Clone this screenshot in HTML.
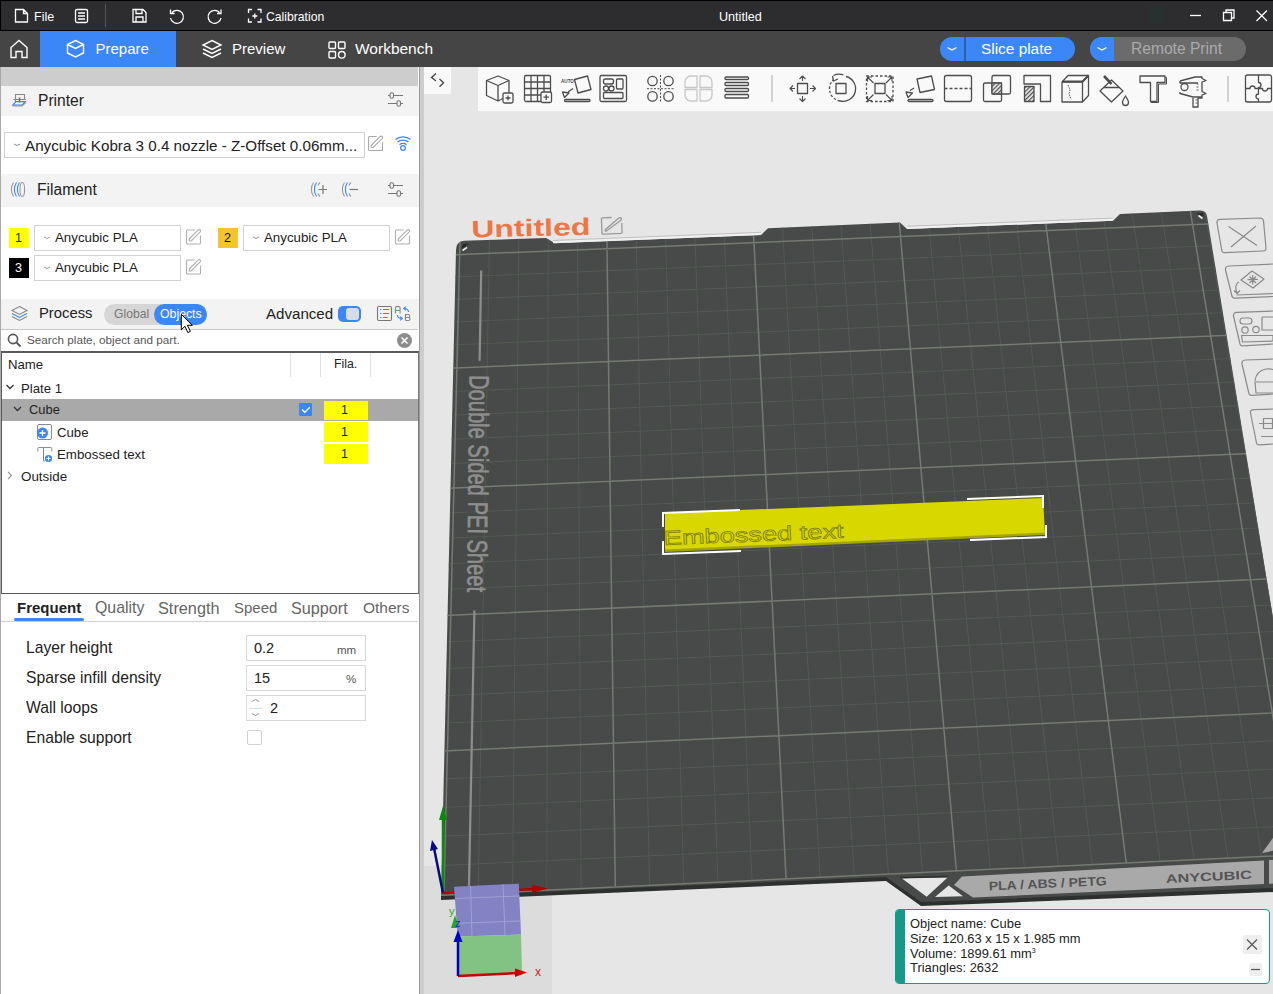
<!DOCTYPE html>
<html><head><meta charset="utf-8">
<style>
*{margin:0;padding:0;box-sizing:border-box}
html,body{width:1273px;height:994px;overflow:hidden;background:#e6e6e6;font-family:"Liberation Sans",sans-serif}
.a{position:absolute}
.t{position:absolute;white-space:nowrap;line-height:1}
svg{position:absolute;overflow:visible}
#title{left:0;top:0;width:1273px;height:31px;background:#2d2d2f;border-top:1px solid #000;border-left:1px solid #000;border-bottom:1px solid #000}
#tabs{left:0;top:31px;width:1273px;height:36px;background:#454545}
#left{left:0;top:67px;width:420px;height:927px;background:#fff;border-left:1px solid #a9a9a9}
.hdr{position:absolute;left:1px;width:418px;background:#f3f3f3}
.box{position:absolute;border:1px solid #d2d2d2;background:#fff}
.ic{stroke:#555;fill:none;stroke-width:1.2}
</style></head><body>
<!-- VIEWPORT -->
<svg class="a" style="left:0;top:0" width="1273" height="994" viewBox="0 0 1273 994">
<rect x="424" y="866" width="128" height="128" fill="#dcdcdc"/>
<path d="M456 250 Q456 241.5 464 240.8 L546 238 L555 243.2 L761 235 L768 228.3 L900 222.6 L907 229 L1113 220.8 L1120 214 L1199 210.6 Q1206 210.5 1207 216 L1275 630 L1275 891 L921 905 L886 880 L441 899 Z" fill="#474a48"/>
<path d="M441 896 L886 877 L921 902 L1275 888 L1275 892 L921 906 L886 881 L441 900 Z" fill="#2e302f"/>
<clipPath id="pc"><path d="M456 250 Q456 241.5 464 240.8 L546 238 L555 243.2 L761 235 L768 228.3 L900 222.6 L907 229 L1113 220.8 L1120 214 L1199 210.6 Q1206 210.5 1207 216 L1275 630 L1275 891 L921 905 L886 880 L441 899 Z"/></clipPath>
<g clip-path="url(#pc)"><path d="M489.5 235.9L478.2 893.4M450.2 277.2L1231.2 244.9M518.9 234.7L512.5 891.8M449.6 299.6L1235.0 266.9M548.2 233.5L546.8 890.2M449.0 322.2L1238.8 289.2M577.5 232.3L581.1 888.5M448.4 345.1L1242.7 311.8M636.1 229.9L649.5 885.3M447.2 391.8L1250.6 357.7M665.4 228.7L683.7 883.7M446.5 415.5L1254.7 381.1M694.6 227.5L717.9 882.1M445.9 439.5L1258.7 404.7M723.9 226.3L752.0 880.5M445.2 463.8L1262.9 428.6M782.3 223.9L820.2 877.3M443.9 513.2L1271.2 477.2M811.5 222.7L854.3 875.7M443.2 538.4L1275.5 502.0M840.7 221.5L888.4 874.1M442.5 563.9L1279.8 527.1M869.9 220.3L922.4 872.5M441.8 589.6L1284.2 552.4M928.2 217.9L990.4 869.3M440.4 642.2L1293.1 604.1M957.3 216.8L1024.4 867.7M439.7 668.9L1297.6 630.4M986.4 215.6L1058.4 866.1M439.0 696.0L1302.2 657.0M1015.5 214.4L1092.3 864.5M438.2 723.4L1306.9 684.0M1073.6 212.0L1160.1 861.3M436.7 779.3L1316.4 738.9M1102.6 210.8L1194.0 859.8M436.0 807.8L1321.2 766.9M1131.7 209.6L1227.9 858.2M435.2 836.6L1326.1 795.3M1160.7 208.4L1261.7 856.6M434.4 865.9L1331.0 824.0M1204.2 206.6L1312.4 854.2M1218.7 206.0L1329.3 853.4" stroke="#535953" stroke-width="1" fill="none"/>
<path d="M460.1 237.1L443.9 895.0M450.8 255.0L1227.4 223.1M606.8 231.1L615.3 886.9M447.8 368.3L1246.7 334.6M753.1 225.1L786.1 878.9M444.6 488.4L1267.0 452.8M899.0 219.1L956.4 870.9M441.1 615.7L1288.6 578.1M1044.5 213.2L1126.2 862.9M437.5 751.2L1311.6 711.3M1189.7 207.2L1295.5 855.0M433.6 895.5L1336.0 853.1" stroke="#757a72" stroke-width="1.5" fill="none"/></g>
<path d="M553 243.2 L761 235 L761 232.3 L553 240.5 Z M907 229 L1113 220.8 L1113 218.1 L907 226.3 Z" fill="#f0f0f0"/><path d="M553 240.5 L761 232.3 M907 226.3 L1113 218.1" stroke="#b4b4b4" stroke-width="0.8"/>
<path d="M902 878.4 L947.6 877.4 L926.7 896.8 Z" fill="#e6e6e6"/><path d="M900 877.5 L948 876.5" stroke="#2f3130" stroke-width="1.6"/>
<path d="M935 897 L948.7 885.5 L963 896.3 Z" fill="#e6e6e6"/>
<path d="M954 885 L962 876.5 L1264 860.5 L1264 884 L973 897.5 Z" fill="#a9a9a9"/>
<path d="M1269 860 L1275 859.7 L1275 883.5 L1269 883.8 Z" fill="#a9a9a9"/>
<path d="M1262 853 L1275 835 L1275 850 L1268 852 Z" fill="#a9a9a9"/>
<text transform="translate(989 890.5) rotate(-2.6)" font-family="Liberation Sans" font-weight="bold" font-size="12.5" fill="#555" textLength="118" lengthAdjust="spacingAndGlyphs">PLA / ABS / PETG</text>
<text transform="translate(1166 883) rotate(-2.8)" font-family="Liberation Sans" font-weight="bold" font-size="12" fill="#555" textLength="86" lengthAdjust="spacingAndGlyphs">ANYCUBIC</text>
<path d="M481.2 270.6 L479.6 360.7 M474.4 610.6 L469 886" stroke="#8e8e8e" stroke-width="2.2"/>
<text transform="translate(469.5 375) rotate(90.6)" font-family="Liberation Sans" font-size="28" fill="#8e8e8e" stroke="#8e8e8e" stroke-width="0.6" textLength="217" lengthAdjust="spacingAndGlyphs">Double Sided PEI Sheet</text>
<path d="M461.5 249 L469.5 243.5 L463 244 Z" fill="#262626"/><path d="M462.5 250.5 L467 247.3" stroke="#f0f0f0" stroke-width="1.6"/><path d="M1196 213.5 L1203 213 L1203.5 216.5 Z" fill="#262626"/><path d="M1198.5 215.5 L1202.5 218.5" stroke="#f0f0f0" stroke-width="1.6"/>
<text x="471.5" y="237.5" font-family="Liberation Sans" font-weight="bold" font-size="24" fill="#f07545" textLength="119" lengthAdjust="spacingAndGlyphs" transform="rotate(-1.3 473 237)">Untitled</text>
<g fill="none" stroke="#999" stroke-width="1.3" stroke-linecap="round"><path d="M611 217.5 L602.5 217.8 Q601.3 217.9 601.4 219 L602 233 Q602.1 234.3 603.3 234.2 L621 233.3 Q622.2 233.2 622.1 232 L621.8 223.5"/><path d="M605.5 229.5 Q604.5 231.5 606.5 231 L620.5 220.5 Q622.5 218.5 620.5 217.7 Q619.5 217.3 618.5 218.2 Z"/></g>
<path d="M665 513 L1043 498 L1045 534 L665 551 Z" fill="#d8d800"/>
<path d="M665 549.5 L1045 532.5 L1045 535 L665 552 Z" fill="#a5a500"/>
<text transform="translate(664 545) rotate(-2.3)" font-family="Liberation Sans" font-size="20" fill="none" stroke="#7a7a06" stroke-width="0.7" textLength="180" lengthAdjust="spacingAndGlyphs">Embossed text</text>
<g stroke="#fff" stroke-width="2" fill="none"><path d="M663 527 V513 L740 510"/><path d="M663 541 V554 L741 551"/><path d="M967 499 L1043 496 V508"/><path d="M970 540 L1046 537 V525"/></g>
<path d="M443 893 L443 812" stroke="#0a8a0a" stroke-width="2.5"/><path d="M439 820 L443 806 L447 820 Z" fill="#0a8a0a"/>
<path d="M443 893 L434 848" stroke="#0a0a80" stroke-width="2.5"/><path d="M430 851 L432 840 L438 849 Z" fill="#0a0a80"/>
<path d="M443 893 L538 889" stroke="#b00000" stroke-width="2.5"/><path d="M532 885 L548 888.5 L532 893 Z" fill="#b00000"/>
<path d="M454 886.7 L518.8 883.7 L521 934.6 L457.7 936.5 Z" fill="#8282c4"/>
<path d="M457.7 936.5 L521 934.6 L522 972.3 L458 976 Z" fill="#82c282"/>
<path d="M470.6 886 L472 936 M503 884.5 L505 935 M455 898.5 L519.5 896 M456.5 923.3 L520.5 921" stroke="#a0a0d4" stroke-width="1" fill="none"/>
<path d="M458 976 L518 973" stroke="#cc0000" stroke-width="2.5"/><path d="M515 968.5 L527 972.5 L515 977 Z" fill="#cc0000"/>
<path d="M458 976 L458 938" stroke="#0000cc" stroke-width="2.5"/><path d="M453.5 942 L458 930 L462.5 942 Z" fill="#0000cc"/>
<path d="M451 928 L455 915 L459 928 Z" fill="#22aa22"/>
<text x="535" y="976" font-family="Liberation Sans" font-size="12" fill="#cc2222">x</text>
<text x="449" y="915" font-family="Liberation Sans" font-size="11" fill="#22aa22">y</text>
<text x="455" y="927" font-family="Liberation Sans" font-size="11" fill="#2222cc">z</text>
<g fill="none" stroke="#8a8a8a" stroke-width="1.2" stroke-linejoin="round"><path d="M1217 223 Q1216.5 219.5 1220 219.3 L1260 218 Q1263 218 1263.5 221 L1266 248 Q1266.3 250.8 1263 251 L1225 252.7 Q1222 252.8 1221.7 250 Z"/><path d="M1228.5 226.5 L1257 245.5 M1256 226 L1231 247"/><path d="M1273 264 L1229 266 Q1225 266.2 1225.5 270 L1231.7 295 Q1232 298.3 1235 298.2 L1273 296.5"/><path d="M1241 280 L1252 271 L1264 279 L1253 288 Z M1247.5 279.7 L1258 279.3 M1252.7 275 V284.5 M1249.5 276.5 L1256 283 M1256 276.5 L1249.5 283"/><path d="M1239 282 Q1235 284 1236 290 L1237 293 M1234 290.5 L1237 293.5 L1240 290.5 M1236.5 295 L1273 293.5"/><path d="M1273 311 L1237 312.3 Q1233 312.5 1233.5 316 L1239.8 343 Q1240 346 1243 345.8 L1273 344"/><rect x="1240" y="318" width="12" height="6" rx="3"/><circle cx="1245" cy="330" r="3.2"/><circle cx="1256" cy="329.5" r="3.2"/><path d="M1262 317 H1273 M1262 317 V330 H1273 M1241.5 335.5 H1273 V341 L1242.5 342 Z"/><path d="M1273 359 L1245.5 360 Q1241.5 360.3 1242 364 L1248.7 392.5 Q1249 395.5 1252 395.3 L1273 394"/><path d="M1255 381 Q1256 371 1266 369 Q1272 368.5 1273 370 M1254.5 382 H1273 M1255 382 L1256 393 H1273"/><path d="M1273 409 L1254 409.6 Q1250 409.8 1250.5 413 L1256.3 442 Q1256.5 445 1259 444.8 L1273 444"/><path d="M1259 423.5 H1273 M1263.5 418.5 h9 v10 h-9 z M1261 436.5 H1273"/></g>
</svg>

<!-- TITLE BAR -->
<div id="title" class="a"></div>
<svg style="left:0;top:0" width="1273" height="31" viewBox="0 0 1273 31">
 <g stroke="#fff" fill="none" stroke-width="1.3">
  <path d="M15.5 9.5h8l4 4v8.5h-12z M23.5 9.5v4h4"/>
  <rect x="75.5" y="9.5" width="12" height="13" rx="1.5"/>
  <path d="M78 13h7M78 16h7M78 19h7"/>
  <path d="M133 9.5h10l3 3v9.5h-13z M136 9.5v4h6v-4 M136 22v-5h7v5"/>
  <path d="M172 12.5a6.5 6.5 0 1 1 -1.5 5.5 M170.5 9.5v4h4"/>
  <path d="M219.5 12.5a6.5 6.5 0 1 0 1.5 5.5 M221 9.5v4h-4"/>
  <path d="M248.5 13v-3.5h3.5 M257.5 9.5h3.5v3.5 M261 18.5v3.5h-3.5 M252 22h-3.5v-3.5 M254.8 13.5v5M252.3 16h5"/>
  <path d="M1190 15.5h11"/>
  <path d="M1223.5 12.5h8v8h-8z M1226 12.5v-2.5h8v8h-2.5"/>
  <path d="M1256.5 10.5l10.5 10.5M1267 10.5l-10.5 10.5"/>
 </g>
 <path d="M105.5 4v23" stroke="#555" stroke-width="1"/>
 <rect x="1148" y="6" width="18" height="17.5" fill="#283030"/>
</svg>
<div class="t" style="left:34px;top:10.5px;font-size:12.5px;color:#fff">File</div>
<div class="t" style="left:266px;top:10.5px;font-size:12.2px;color:#fff">Calibration</div>
<div class="t" style="left:719px;top:10.5px;font-size:12.6px;color:#fff">Untitled</div>

<!-- TAB BAR -->
<div id="tabs" class="a"></div>
<div class="a" style="left:40px;top:31px;width:136px;height:36px;background:#3b87f8"></div>
<svg style="left:0;top:31px" width="440" height="36" viewBox="0 31 440 36">
 <g stroke="#fff" fill="none" stroke-width="1.4">
  <path d="M11 57.5v-10l8-7 8 7v10h-5v-6h-6v6z"/>
  <path d="M75.5 40.5l8 4v8.5l-8 4-8-4v-8.5z M67.5 44.5l8 4 8-4 M75.5 48.5v0"/>
  <path d="M212 40.5l9 4.5-9 4.5-9-4.5z M203 49l9 4.5 9-4.5 M203 53l9 4.5 9-4.5"/>
  <rect x="329" y="42" width="6.5" height="6.5" rx="1"/><rect x="338.5" y="42" width="6.5" height="6.5" rx="1"/>
  <rect x="329" y="51.5" width="6.5" height="6.5" rx="1"/><circle cx="341.8" cy="54.8" r="3.3"/>
 </g>
</svg>
<div class="t" style="left:95.5px;top:41px;font-size:15px;color:#fff">Prepare</div>
<div class="t" style="left:232px;top:41px;font-size:15px;color:#fff">Preview</div>
<div class="t" style="left:355px;top:41px;font-size:15.5px;color:#fff">Workbench</div>

<!-- slice / remote print -->
<div class="a" style="left:940px;top:37px;width:135px;height:24px;border-radius:12px;background:#3b87f8"></div>
<div class="a" style="left:964px;top:37px;width:2px;height:24px;background:#2e5fa8"></div>
<div class="t" style="left:981px;top:41px;font-size:15.4px;color:#fff">Slice plate</div>
<div class="a" style="left:1090px;top:37px;width:156px;height:24px;border-radius:12px;background:#6b6b6b"></div>
<div class="a" style="left:1090px;top:37px;width:24px;height:24px;border-radius:12px 0 0 12px;background:#3b87f8"></div>
<div class="t" style="left:1131px;top:41px;font-size:15.6px;color:#aaa">Remote Print</div>
<svg style="left:940px;top:37px" width="310" height="24" viewBox="940 37 310 24">
 <path d="M947.5 47.5l4.5 2.5 4.5-2.5 M1097.5 47.5l4.5 2.5 4.5-2.5" stroke="#fff" fill="none" stroke-width="1.3"/>
</svg>

<!-- TOOLBAR -->
<div class="a" style="left:424px;top:67px;width:27px;height:27px;background:#f9f9f9"></div>
<svg style="left:424px;top:67px" width="27" height="27" viewBox="424 67 27 27">
 <path d="M436 73.5l-4.5 4 4.5 3.5 M439.5 79l4 3.8-4 4" stroke="#444" fill="none" stroke-width="1.3"/>
</svg>
<div class="a" style="left:478px;top:67px;width:795px;height:44px;background:#f9f9f9"></div>
<svg style="left:478px;top:67px" width="795" height="44" viewBox="478 67 795 44">
<defs>
 <pattern id="hatch" width="3" height="3" patternUnits="userSpaceOnUse" patternTransform="rotate(45)">
  <rect width="3" height="3" fill="#f9f9f9"/><rect width="1.4" height="3" fill="#555"/>
 </pattern>
</defs>
<g fill="none" stroke="#4d4d4d" stroke-width="1.3" stroke-linejoin="round">
 <!-- add cube -->
 <path d="M486.5 80.5l11.5-4.5 11 4.5v15l-11 5.5-11.5-5.5z M486.5 80.5l11.5 5 11-5 M498 85.5v15.5"/>
 <rect x="503" y="93" width="10" height="10" rx="1.5" fill="#f9f9f9"/>
 <path d="M508 95.5v5M505.5 98h5"/>
 <!-- add plate grid -->
 <rect x="524.5" y="75.5" width="26" height="26" rx="1.5"/>
 <path d="M531 75.5v26M537.5 75.5v26M544 75.5v26 M524.5 82h26M524.5 88.5h26M524.5 95h26"/>
 <rect x="541" y="92" width="10.5" height="10.5" rx="1.5" fill="#f9f9f9"/>
 <path d="M546.2 94.5v5.5M543.5 97.2h5.5"/>
 <!-- auto orient -->
 <path d="M574.5 79.5l13-3.5 3.5 13.5-13 3.5z"/>
 <rect x="564.5" y="99.5" width="25.5" height="2" rx="1"/>
 <path d="M573 88.5l-5 3.5 M562.5 92l2 5.5 4.5-4.5z"/>
 <text x="561" y="83" font-size="4.6" fill="#4d4d4d" stroke="none" font-family="Liberation Sans" font-weight="bold">AUTO</text>
 <!-- arrange -->
 <rect x="600" y="75.5" width="26.5" height="26" rx="1.5"/>
 <rect x="603.5" y="79" width="10" height="5" rx="2"/>
 <rect x="616.5" y="79" width="6.5" height="10" rx="1"/>
 <circle cx="606" cy="88.5" r="2.5"/><circle cx="611.5" cy="88.5" r="2.5"/>
 <rect x="603.5" y="92.5" width="19.5" height="6" rx="1"/>
 <!-- split to objects -->
 <circle cx="652.5" cy="81" r="4.7"/><circle cx="668.5" cy="81" r="4.7"/>
 <circle cx="652.5" cy="96.4" r="4.7"/><circle cx="668.5" cy="96.4" r="4.7"/>
 <path d="M647 88.7h27 M660.5 75v27" stroke-dasharray="2 1.5" stroke-width="1"/>
 <!-- split to parts (disabled) -->
 <g stroke="#c8c8c8">
  <path d="M697 76h-6a6 6 0 0 0 -6 6v5.5h12z M700 76h6a6 6 0 0 1 6 6v5.5h-12z M697 101h-6a6 6 0 0 1 -6 -6v-5.5h12z M700 101h6a6 6 0 0 0 6 -6v-5.5h-12z"/>
 </g>
 <!-- layers -->
 <rect x="725" y="77" width="23.5" height="2.5" rx="1"/>
 <rect x="725" y="82.5" width="23.5" height="3" rx="1"/>
 <rect x="725" y="88.5" width="23.5" height="3" rx="1"/>
 <rect x="725" y="94.5" width="23.5" height="3.5" rx="1"/>
 <!-- separator -->
 <path d="M772 75v27" stroke="#c4c4c4" stroke-width="1.5"/>
 <!-- move -->
 <rect x="797.5" y="83.5" width="10" height="10"/>
 <path d="M802.5 76v5 M802.5 96v5.5 M790 88.5h5 M810 88.5h5.5 M799.5 79l3-3 3 3 M799.5 98.5l3 3 3-3 M793 85.5l-3 3 3 3 M812.5 85.5l3 3-3 3" stroke-width="1.1"/>
 <!-- rotate -->
 <rect x="836" y="83.5" width="10" height="10"/>
 <path d="M846 76.5a12.5 12.5 0 0 1 -6 24.5" />
 <path d="M840 101a12.5 12.5 0 0 1 -7 -21" stroke-dasharray="2.5 1.8"/>
 <path d="M833.5 75.5a12.5 12.5 0 0 1 10 -0.5 M832.5 76l1 5 4.5-2"/>
 <!-- scale -->
 <rect x="875" y="83.5" width="10" height="10"/>
 <path d="M866.5 76h26.5v25.5h-26.5z" stroke-dasharray="2.5 2"/>
 <path d="M867.5 77l6 6 M892 77l-6 6 M867.5 100.5l6 -6 M892 100.5l-6 -6 M867.5 81.5v-4.5h4.5 M892 81.5v-4.5h-4.5 M867.5 96v4.5h4.5 M892 96v4.5h-4.5" stroke-width="1.1"/>
 <!-- lay on face -->
 <path d="M917 79l14.5-3 3 13.5-14.5 3z"/>
 <rect x="908" y="99.5" width="25" height="2" rx="1"/>
 <path d="M914 88l-4 2.5 M906 92l2 5.5 4.5-4.5z"/>
 <!-- cut -->
 <rect x="944.5" y="75.5" width="27" height="26" rx="2"/>
 <path d="M944.5 88.5h27" stroke-dasharray="3 2"/>
 <!-- boolean -->
 <rect x="983.5" y="83" width="18" height="18.5" rx="1.5"/>
 <rect x="992" y="75.5" width="18.5" height="18.5" rx="1.5"/>
 <rect x="992" y="83" width="9.5" height="11" fill="url(#hatch)"/>
 <!-- support paint -->
 <path d="M1024 75.5h26.5v26h-10v-17.5h-16.5z"/>
 <rect x="1024.5" y="86.5" width="9.5" height="15" fill="url(#hatch)"/>
 <!-- seam -->
 <path d="M1062 82l6 -6.5h20.5v20l-6 6.5h-20.5z M1062 82h20.5v20 M1082.5 82l6 -6.5" />
 <path d="M1062.5 81.5h20 l6 -6" stroke-width="2"/>
 <path d="M1068 85l2 5 -1 4 2 5" stroke-width="0.9" stroke-dasharray="1.5 1"/>
 <!-- color paint -->
 <path d="M1100 91l11.5-11 11.5 11 -11.5 11z M1103.5 87.5h15.5"/>
 <path d="M1104 76l7.5 8" stroke-width="2.6"/>
 <path d="M1125.5 96c-2 3-3 5-3 6.5a3 3 0 0 0 6 0c0-1.5-1-3.5-3-6.5z"/>
 <!-- text T -->
 <path d="M1140 76h25v6.5h-8v19h-6.5v-19h-10.5z"/>
 <path d="M1165 77.5h1.5v6.5h-8v18.5h-7.5" stroke-width="1"/>
 <!-- measure -->
 <path d="M1180 81l15-4h7v1.5l4 2l-4 1.5v9.5l4 2-4 1.5v3h-4v9h-5v-9" />
 <path d="M1180 81v2h18 M1180 92v1.5l13 3.5h9" />
 <circle cx="1184.5" cy="87" r="3.5"/>
 <path d="M1196.5 84h2M1196.5 87h2M1196.5 90h2 M1195.5 100h2M1195.5 103h2" stroke-width="0.9"/>
 <!-- separator -->
 <path d="M1228 76v26" stroke="#c4c4c4" stroke-width="1.5"/>
 <!-- assembly -->
 <rect x="1245.5" y="75" width="26" height="27" rx="2"/>
 <path d="M1258.5 75v7.5a2.5 2.5 0 0 1 0 5v1h-3.5a2.5 2.5 0 0 0 -5 0h-4.5 M1258.5 88.5v5.5a2.5 2.5 0 0 0 0 5v3 M1258.5 88.5h4a2.5 2.5 0 0 0 5 0h4"/>
</g>
</svg>


<!-- LEFT PANEL -->
<div id="left" class="a"></div>
<div class="a" style="left:420px;top:67px;width:4px;height:927px;background:#cdcdcd"></div>
<div class="a" style="left:419px;top:67px;width:1px;height:927px;background:#9a9a9a"></div>
<div class="a" style="left:1px;top:67px;width:417px;height:19px;background:#cdcdcd"></div>
<!-- Printer header -->
<div class="hdr" style="top:86px;height:30px"></div>
<svg style="left:0;top:86px" width="420" height="30" viewBox="0 86 420 30">
 <g fill="none" stroke-width="1.1">
  <path d="M15.5 102.5v-8h9v5" stroke="#8a8a8a"/>
  <path d="M13.5 99.5h12.5" stroke="#8a8a8a"/>
  <path d="M19.5 97.5v5" stroke="#666" stroke-width="1.4"/>
  <path d="M15.8 101.6h9.4l-3.2 3.6h-9.2z" stroke="#3b87f8" stroke-width="1.2"/>
  <path d="M12.8 106h9.2l4-3.6" stroke="#999" stroke-width="1.2"/>
  <path d="M388 95.5h15 M388 103.5h15" stroke="#777"/>
  <rect x="390" y="92.7" width="3.5" height="5.6" rx="1.6" fill="#f3f3f3" stroke="#777"/>
  <rect x="397" y="100.7" width="3.5" height="5.6" rx="1.6" fill="#f3f3f3" stroke="#777"/>
 </g>
</svg>
<div class="t" style="left:38px;top:93px;font-size:15.6px;color:#222">Printer</div>

<!-- printer combo -->
<div class="box" style="left:4px;top:132px;width:361px;height:26px;border-color:#cfcfcf"></div>
<div class="t" style="left:25px;top:138px;font-size:15.2px;color:#222">Anycubic Kobra 3 0.4 nozzle - Z-Offset 0.06mm...</div>
<svg style="left:0;top:120px" width="420" height="50" viewBox="0 120 420 50">
 <path d="M14 144l3 1.5 3-1.5" stroke="#888" fill="none" stroke-width="1"/>
 <g fill="none" stroke="#aaa" stroke-width="1.1">
  <path d="M376.7 136.5h-7.2q-1 0-1 1v12q0 1 1 1h12q1 0 1-1v-7.5" /><path d="M371.2 145.5l8.8-8.8q1.2-1.2 2.2-.2t-.2 2.2l-8.8 8.8h-2z" />
 </g>
 <g fill="none" stroke="#3b87f8" stroke-width="1.3">
  <path d="M395.5 139.5a11 10 0 0 1 15 0 M397.5 142a8 7 0 0 1 11 0 M399.5 144.8a5 4.5 0 0 1 7 0"/>
  <circle cx="403" cy="148" r="2.3"/>
 </g>
</svg>

<!-- Filament header -->
<div class="hdr" style="top:174px;height:33px"></div>
<svg style="left:0;top:174px" width="420" height="33" viewBox="0 174 420 33">
 <g fill="none" stroke-width="1.1">
  <path d="M13.5 182.5c-2.8 4-2.8 10 0 14" stroke="#999"/>
  <path d="M16.5 182.5c-2.8 4-2.8 10 0 14 M19.5 182.5c-2.8 4-2.8 10 0 14" stroke="#3b87f8"/>
  <ellipse cx="22.3" cy="189.5" rx="2.3" ry="7" stroke="#999"/>
  <path d="M313.5 182.5c-2.8 4-2.8 10 0 14 M320 182.5c-1 1-1.6 2-2 3 M318 193.5c.4 1 1 2 2 3" stroke="#999"/>
  <path d="M316.5 182.5c-2.8 4-2.8 10 0 14" stroke="#3b87f8"/>
  <path d="M318.5 189.5h8.5 M323 185v9" stroke="#777" stroke-width="1.2"/>
  <path d="M344.5 182.5c-2.8 4-2.8 10 0 14 M351 182.5c-1 1-1.6 2-2 3 M349 193.5c.4 1 1 2 2 3" stroke="#999"/>
  <path d="M347.5 182.5c-2.8 4-2.8 10 0 14" stroke="#3b87f8"/>
  <path d="M349.5 189.5h8.5" stroke="#777" stroke-width="1.2"/>
  <path d="M388 185.5h15 M388 193.5h15" stroke="#777"/>
  <rect x="390" y="182.7" width="3.5" height="5.6" rx="1.6" fill="#f3f3f3" stroke="#777"/>
  <rect x="397" y="190.7" width="3.5" height="5.6" rx="1.6" fill="#f3f3f3" stroke="#777"/>
 </g>
</svg>
<div class="t" style="left:37px;top:182px;font-size:15.6px;color:#222">Filament</div>

<!-- filament rows -->
<div class="a" style="left:9px;top:228px;width:20px;height:20px;background:#ffff00"></div>
<div class="t" style="left:15px;top:232px;font-size:12.5px;color:#333">1</div>
<div class="box" style="left:34px;top:225px;width:147px;height:26px"></div>
<div class="t" style="left:55px;top:231px;font-size:13.3px;color:#222">Anycubic PLA</div>
<div class="a" style="left:218px;top:228px;width:20px;height:20px;background:#f4c430"></div>
<div class="t" style="left:224px;top:232px;font-size:12.5px;color:#111">2</div>
<div class="box" style="left:243px;top:225px;width:147px;height:26px"></div>
<div class="t" style="left:264px;top:231px;font-size:13.3px;color:#222">Anycubic PLA</div>
<div class="a" style="left:9px;top:258px;width:20px;height:20px;background:#000"></div>
<div class="t" style="left:15px;top:262px;font-size:12.5px;color:#fff">3</div>
<div class="box" style="left:34px;top:255px;width:147px;height:26px"></div>
<div class="t" style="left:55px;top:261px;font-size:13.3px;color:#222">Anycubic PLA</div>
<svg style="left:0;top:220px" width="420" height="65" viewBox="0 220 420 65">
 <path d="M44 237l3 1.5 3-1.5 M253 237l3 1.5 3-1.5 M44 267l3 1.5 3-1.5" stroke="#999" fill="none" stroke-width="1"/>
 <g fill="none" stroke="#b0b0b0" stroke-width="1.1">
  <path d="M194.7 230.0h-7.2q-1 0-1 1v12q0 1 1 1h12q1 0 1-1v-7.5" /><path d="M189.2 239.0l8.8-8.8q1.2-1.2 2.2-.2t-.2 2.2l-8.8 8.8h-2z" />
  <path d="M194.7 260.0h-7.2q-1 0-1 1v12q0 1 1 1h12q1 0 1-1v-7.5" /><path d="M189.2 269.0l8.8-8.8q1.2-1.2 2.2-.2t-.2 2.2l-8.8 8.8h-2z" />
  <path d="M403.7 230.0h-7.2q-1 0-1 1v12q0 1 1 1h12q1 0 1-1v-7.5" /><path d="M398.2 239.0l8.8-8.8q1.2-1.2 2.2-.2t-.2 2.2l-8.8 8.8h-2z" />
 </g>
</svg>

<!-- Process header -->
<div class="hdr" style="top:299px;height:30px"></div>
<div class="a" style="left:1px;top:329px;width:417px;height:1px;background:#c8c8c8"></div>
<svg style="left:0;top:299px" width="420" height="31" viewBox="0 299 420 31">
 <g fill="none" stroke-width="1.1">
  <path d="M19.5 306.5l7.5 4-7.5 4-7.5-4z" stroke="#888"/>
  <path d="M12 313.5l7.5 4 7.5-4" stroke="#3b87f8"/>
  <path d="M12 316.5l7.5 4 7.5-4" stroke="#888"/>
 </g>
</svg>
<div class="t" style="left:39px;top:306px;font-size:14.8px;color:#222">Process</div>
<div class="a" style="left:104px;top:304px;width:103px;height:21px;border-radius:11px;background:#d6d6d6"></div>
<div class="a" style="left:154px;top:304px;width:53px;height:21px;border-radius:11px;background:#3b87f8"></div>
<div class="t" style="left:114px;top:308px;font-size:12.2px;color:#777">Global</div>
<div class="t" style="left:160px;top:308px;font-size:12.3px;color:#fff">Objects</div>
<div class="t" style="left:266px;top:306px;font-size:15.1px;color:#222">Advanced</div>
<div class="a" style="left:338px;top:306px;width:23px;height:16px;border-radius:5px;background:#3b87f8"></div>
<div class="a" style="left:346px;top:308px;width:13px;height:12px;border-radius:3px;background:#d8dce6"></div>
<svg style="left:370px;top:299px" width="50" height="31" viewBox="370 299 50 31">
 <g fill="none" stroke-width="1.1">
  <rect x="377.5" y="306.5" width="14" height="14" rx="1.2" stroke="#777"/>
  <path d="M380 309.5h1.5M380 313.5h1.5M380 317.5h1.5 M383 309.5h6M383 313.5h6M383 317.5h4.5" stroke="#3b87f8"/>
  <path d="M395.5 313.5V308.2q0-1.8 2.3-1.8t2.3 1.8v5.3 M395.5 310.5h4.6" stroke="#888"/>
  <path d="M408.5 312q0-3.5-4.5-3.5 M405.8 306.7l-2 1.8 2 1.8" stroke="#3b87f8"/>
  <path d="M397.5 315q0 3.5 4.5 3.5 M400.2 316.7l2 1.8-2 1.8" stroke="#3b87f8"/>
  <path d="M405.5 320.5v-6h2.8a1.5 1.5 0 0 1 0 3h-2.8 M405.5 317.5h3a1.5 1.5 0 0 1 0 3h-3" stroke="#888"/>
 </g>
</svg>
<!-- cursor -->
<svg style="left:180px;top:313px" width="16" height="22" viewBox="0 0 16 22">
 <path d="M1.3 1.3v15.5l3.6-3.5 3 6.3 2.5-1.2-3-6.1h5z" fill="#fff" stroke="#000" stroke-width="1" stroke-linejoin="round"/>
</svg>

<!-- search -->
<svg style="left:0;top:330px" width="420" height="22" viewBox="0 330 420 22">
 <circle cx="13" cy="339" r="4.6" fill="none" stroke="#555" stroke-width="1.6"/>
 <path d="M16.5 342.5l4 4" stroke="#555" stroke-width="1.8"/>
 <circle cx="404.5" cy="340.5" r="7.5" fill="#8d8d8d"/>
 <path d="M401.5 337.5l6 6M407.5 337.5l-6 6" stroke="#fff" stroke-width="1.6"/>
</svg>
<div class="t" style="left:27px;top:334px;font-size:11.7px;color:#555">Search plate, object and part.</div>

<!-- object list -->
<div class="a" style="left:1px;top:351px;width:418px;height:243px;border:1px solid #5a5a5a;border-top:2px solid #5a5a5a;border-right:1px solid #777"></div>
<div class="a" style="left:290px;top:353px;width:1px;height:24px;background:#e0e0e0"></div>
<div class="a" style="left:320px;top:353px;width:1px;height:24px;background:#e0e0e0"></div>
<div class="a" style="left:370px;top:353px;width:1px;height:24px;background:#e0e0e0"></div>
<div class="t" style="left:8px;top:358px;font-size:13.2px;color:#222">Name</div>
<div class="t" style="left:334px;top:358px;font-size:12.3px;color:#222">Fila.</div>
<div class="t" style="left:21px;top:382px;font-size:13.2px;color:#222">Plate 1</div>
<div class="a" style="left:2px;top:399px;width:416px;height:22px;background:#a9a9a9"></div>
<div class="t" style="left:29px;top:404px;font-size:12.9px;color:#222">Cube</div>
<div class="a" style="left:299px;top:403px;width:13px;height:13px;background:#3b87f8;border-radius:1px"></div>
<div class="a" style="left:324px;top:401px;width:44px;height:19px;background:#ffff00"></div>
<div class="t" style="left:341px;top:404px;font-size:12.5px;color:#222">1</div>
<div class="t" style="left:57px;top:426px;font-size:13.2px;color:#222">Cube</div>
<div class="a" style="left:324px;top:422px;width:44px;height:20px;background:#ffff00"></div>
<div class="t" style="left:341px;top:426px;font-size:12.5px;color:#222">1</div>
<div class="t" style="left:57px;top:448px;font-size:13.3px;color:#222">Embossed text</div>
<div class="a" style="left:324px;top:444px;width:44px;height:20px;background:#ffff00"></div>
<div class="t" style="left:341px;top:448px;font-size:12.5px;color:#222">1</div>
<div class="t" style="left:21px;top:470px;font-size:13.4px;color:#222">Outside</div>
<svg style="left:0;top:377px" width="420" height="110" viewBox="0 377 420 110">
 <g fill="none" stroke="#333" stroke-width="1.3">
  <path d="M6.5 385l3.5 3.5 3.5-3.5"/>
  <path d="M14 407l3.5 3.5 3.5-3.5"/>
 </g>
 <path d="M8 472l3.5 3.5-3.5 3.5" fill="none" stroke="#999" stroke-width="1.1"/>
 <path d="M302 409.5l2.8 2.8 5-5" fill="none" stroke="#fff" stroke-width="1.3"/>
 <rect x="37.5" y="424.5" width="14" height="15" rx="1.5" fill="none" stroke="#8a8a8a" stroke-width="1"/>
 <circle cx="42.5" cy="433" r="5.5" fill="#3b87f8"/>
 <path d="M39.5 433h6M42.5 430v6" stroke="#fff" stroke-width="1.3"/>
 <path d="M37.8 451.5v-3q0-1 1-1h12q1 0 1 1v3 M43.5 447.5v13.5h1.5" fill="none" stroke="#8a8a8a" stroke-width="1"/>
 <circle cx="48.5" cy="458.5" r="3.6" fill="#3b87f8"/>
 <path d="M46.5 458.5h4M48.5 456.5v4" stroke="#fff" stroke-width="1"/>
</svg>

<!-- tabs -->
<div class="t" style="left:17px;top:600px;font-size:15px;font-weight:bold;color:#222">Frequent</div>
<div class="a" style="left:14px;top:618px;width:70px;height:3px;border-radius:2px;background:#3b87f8"></div>
<div class="t" style="left:95px;top:600px;font-size:15.9px;color:#666">Quality</div>
<div class="t" style="left:158px;top:600px;font-size:16.3px;color:#666">Strength</div>
<div class="t" style="left:234px;top:600px;font-size:15px;color:#666">Speed</div>
<div class="t" style="left:291px;top:600px;font-size:16.2px;color:#666">Support</div>
<div class="t" style="left:363px;top:600px;font-size:15.5px;color:#666">Others</div>
<div class="a" style="left:1px;top:621px;width:417px;height:1px;background:#d0d0d0"></div>

<!-- settings -->
<div class="t" style="left:26px;top:640px;font-size:15.7px;color:#222">Layer height</div>
<div class="box" style="left:246px;top:635px;width:120px;height:26px;border-color:#d8d8d8"></div>
<div class="t" style="left:254px;top:641px;font-size:14.5px;color:#222">0.2</div>
<div class="t" style="left:337px;top:645px;font-size:11.5px;color:#555">mm</div>
<div class="t" style="left:26px;top:670px;font-size:15.7px;color:#222">Sparse infill density</div>
<div class="box" style="left:246px;top:665px;width:120px;height:26px;border-color:#d8d8d8"></div>
<div class="t" style="left:254px;top:671px;font-size:14.5px;color:#222">15</div>
<div class="t" style="left:346px;top:674px;font-size:11.5px;color:#555">%</div>
<div class="t" style="left:26px;top:700px;font-size:15.7px;color:#222">Wall loops</div>
<div class="box" style="left:246px;top:695px;width:120px;height:26px;border-color:#d8d8d8"></div>
<div class="t" style="left:270px;top:701px;font-size:14.5px;color:#222">2</div>
<div class="t" style="left:26px;top:730px;font-size:15.7px;color:#222">Enable support</div>
<div class="a" style="left:247px;top:730px;width:15px;height:15px;border:1px solid #d0d0d0;border-radius:2px;background:#fff"></div>
<svg style="left:246px;top:695px" width="20" height="26" viewBox="246 695 20 26">
 <path d="M252 701.5l3.5-2 3.5 2 M252 713.5l3.5 2 3.5-2" fill="none" stroke="#999" stroke-width="1"/>
 <path d="M249 708.5h13" stroke="#ddd" stroke-width="1"/>
</svg>
<!-- info box -->
<div class="a" style="left:895px;top:909px;width:375px;height:75px;border:1px solid #17998a;border-radius:4px;background:#fff;overflow:hidden">
 <div class="a" style="left:0;top:0;width:9px;height:75px;background:#17998a"></div>
</div>
<div class="t" style="left:910px;top:918px;font-size:12.9px;color:#222">Object name: Cube</div>
<div class="t" style="left:910px;top:933px;font-size:12.9px;color:#222">Size: 120.63 x 15 x 1.985 mm</div>
<div class="t" style="left:910px;top:947.5px;font-size:12.9px;color:#222">Volume: 1899.61 mm<span style="font-size:7px;position:relative;top:-5px">3</span></div>
<div class="t" style="left:910px;top:962.3px;font-size:12.9px;color:#222">Triangles: 2632</div>
<div class="a" style="left:1243px;top:935px;width:19px;height:19px;background:#eeeeee;border-radius:2px"></div>
<div class="a" style="left:1249px;top:963px;width:13px;height:13px;background:#eeeeee;border-radius:2px"></div>
<svg style="left:1240px;top:930px" width="30" height="50" viewBox="1240 930 30 50">
 <path d="M1247 939.5l10 10M1257 939.5l-10 10" stroke="#555" stroke-width="1.2"/>
 <path d="M1251 969.5h9" stroke="#555" stroke-width="1.2"/>
</svg>


</body></html>
